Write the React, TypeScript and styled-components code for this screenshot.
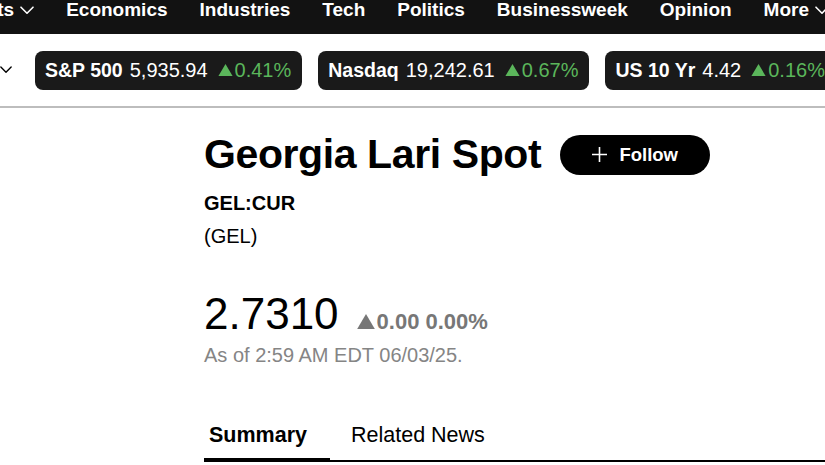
import React from "react";
import styled, { createGlobalStyle } from "styled-components";

const GlobalStyle = createGlobalStyle`
  html, body {
    margin: 0;
    padding: 0;
    background: #fff;
    overflow: hidden;
  }
  body {
    font-family: "Liberation Sans", Arial, sans-serif;
    color: #000;
  }
`;

const Page = styled.div`
  width: 825px;
  height: 465px;
  overflow: hidden;
`;

const NavBar = styled.nav`
  display: flex;
  justify-content: flex-end;
  align-items: flex-start;
  gap: 32px;
  height: 34px;
  background: #121212;
  overflow: hidden;
  margin-right: -4px;
`;

const NavItem = styled.a`
  display: flex;
  align-items: center;
  gap: 6px;
  flex-shrink: 0;
  color: #fff;
  font-size: 19px;
  font-weight: 700;
  white-space: nowrap;
  line-height: 20px;
`;

const TickerRow = styled.div`
  display: flex;
  align-items: center;
  gap: 16px;
  height: 72px;
  border-bottom: 2px solid #bdbdbd;
  overflow: hidden;
`;

const DropChevron = styled.span`
  display: flex;
  width: 19px;
  flex-shrink: 0;
`;

const Pill = styled.div`
  display: flex;
  align-items: center;
  gap: 7px;
  flex-shrink: 0;
  height: 39px;
  padding: 0 11px 0 10px;
  border-radius: 8px;
  background: #1a1a1a;
  color: #fff;
  font-size: 20px;
  white-space: nowrap;
`;

const PillName = styled.span`
  font-size: 19.5px;
  font-weight: 700;
`;

const PillValue = styled.span`
  font-weight: 400;
`;

const Change = styled.span<{ $tone: "up" | "flat" }>`
  display: flex;
  align-items: center;
  gap: 2px;
  margin-left: 3px;
  color: ${(p) => (p.$tone === "up" ? "#5bb65b" : "#777")};
`;

const Content = styled.main`
  padding-left: 204px;
  padding-top: 26px;
`;

const TitleRow = styled.div`
  display: flex;
  align-items: center;
  gap: 19px;
`;

const Title = styled.h1`
  margin: 0;
  font-size: 41px;
  font-weight: 700;
  letter-spacing: -0.4px;
  line-height: 1;
`;

const FollowButton = styled.button`
  display: flex;
  align-items: center;
  justify-content: center;
  gap: 12px;
  width: 150px;
  height: 40px;
  border: none;
  border-radius: 20px;
  background: #000;
  color: #fff;
  font-family: "Liberation Sans", Arial, sans-serif;
  font-size: 18.5px;
  font-weight: 700;
  cursor: pointer;
`;

const Ticker = styled.div`
  margin-top: 18px;
  font-size: 20px;
  font-weight: 700;
  line-height: 1;
`;

const Code = styled.div`
  margin-top: 13px;
  font-size: 20px;
  line-height: 1;
`;

const PriceRow = styled.div`
  display: flex;
  align-items: baseline;
  gap: 18px;
  margin-top: 46px;
`;

const Price = styled.span`
  font-size: 44px;
  line-height: 1;
`;

const PriceChange = styled(Change)`
  font-size: 22px;
  font-weight: 700;
  align-items: baseline;
  margin-left: 0;
`;

const AsOf = styled.div`
  margin-top: 8px;
  font-size: 20px;
  color: #858585;
`;

const Tabs = styled.div`
  display: flex;
  margin-top: 56px;
  border-bottom: 2px solid #000;
`;

const Tab = styled.div<{ $active?: boolean }>`
  padding: 0 0 10px 5px;
  width: ${(p) => (p.$active ? "126px" : "auto")};
  margin-left: ${(p) => (p.$active ? "0" : "16px")};
  margin-bottom: -2px;
  border-bottom: 4px solid ${(p) => (p.$active ? "#000" : "transparent")};
  font-size: 21.5px;
  font-weight: ${(p) => (p.$active ? 700 : 400)};
  box-sizing: border-box;
`;

const Chevron = ({ size = 14, color = "#fff" }: { size?: number; color?: string }) => (
  <svg width={size} height={size * 0.6} viewBox="0 0 14 8" fill="none">
    <path d="M1 1l6 6 6-6" stroke={color} strokeWidth="1.6" strokeLinecap="round" strokeLinejoin="round" />
  </svg>
);

const Triangle = ({ size }: { size: number }) => (
  <svg width={size} height={size * 0.85} viewBox="0 0 20 17">
    <path d="M10 0L20 17H0z" fill="currentColor" />
  </svg>
);

const Plus = () => (
  <svg width="15" height="15" viewBox="0 0 15 15">
    <path d="M7.5 0v15M0 7.5h15" stroke="#fff" strokeWidth="1.6" />
  </svg>
);

const navItems = [
  { label: "Markets", menu: true },
  { label: "Economics" },
  { label: "Industries" },
  { label: "Tech" },
  { label: "Politics" },
  { label: "Businessweek" },
  { label: "Opinion" },
  { label: "More", menu: true },
];

const tickers = [
  { name: "S&P 500", value: "5,935.94", change: "0.41%" },
  { name: "Nasdaq", value: "19,242.61", change: "0.67%" },
  { name: "US 10 Yr", value: "4.42", change: "0.16%" },
];

const App = () => {
  return (
    <Page>
      <GlobalStyle />
      <NavBar>
        {navItems.map((item) => (
          <NavItem key={item.label}>
            {item.label}
            {item.menu && <Chevron />}
          </NavItem>
        ))}
      </NavBar>
      <TickerRow>
        <DropChevron>
          <Chevron size={12} color="#000" />
        </DropChevron>
        {tickers.map((t) => (
          <Pill key={t.name}>
            <PillName>{t.name}</PillName>
            <PillValue>{t.value}</PillValue>
            <Change $tone="up">
              <Triangle size={15} />
              {t.change}
            </Change>
          </Pill>
        ))}
      </TickerRow>
      <Content>
        <TitleRow>
          <Title>Georgia Lari Spot</Title>
          <FollowButton>
            <Plus />
            Follow
          </FollowButton>
        </TitleRow>
        <Ticker>GEL:CUR</Ticker>
        <Code>(GEL)</Code>
        <PriceRow>
          <Price>2.7310</Price>
          <PriceChange $tone="flat">
            <Triangle size={18} />
            0.00 0.00%
          </PriceChange>
        </PriceRow>
        <AsOf>As of 2:59 AM EDT 06/03/25.</AsOf>
        <Tabs>
          <Tab $active>Summary</Tab>
          <Tab>Related News</Tab>
        </Tabs>
      </Content>
    </Page>
  );
};

export default App;
